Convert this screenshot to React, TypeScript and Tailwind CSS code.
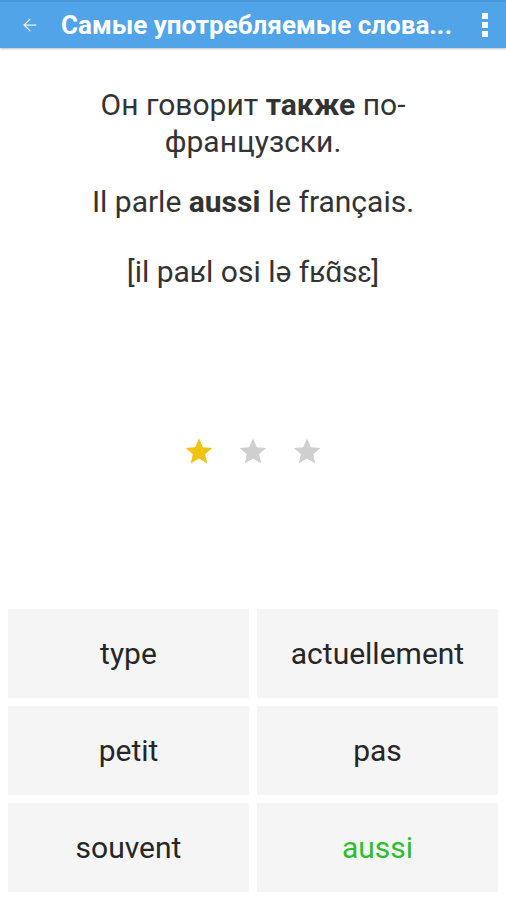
import { ArrowLeft } from 'lucide-react';

const words = [
  { text: 'type', correct: false },
  { text: 'actuellement', correct: false },
  { text: 'petit', correct: false },
  { text: 'pas', correct: false },
  { text: 'souvent', correct: false },
  { text: 'aussi', correct: true },
];

function Star({ filled }: { filled: boolean }) {
  return (
    <svg viewBox="0 0 24 24" className="w-[32px] h-[32px]">
      <path
        d="M12 2.5l2.9 6.6 7.1.6-5.4 4.7 1.6 7-6.2-3.7-6.2 3.7 1.6-7L2 9.7l7.1-.6z"
        fill={filled ? '#f2c315' : '#cfcfcf'}
      />
    </svg>
  );
}

export default function App() {
  return (
    <div className="w-[506px] h-[900px] bg-white flex flex-col font-['Roboto',sans-serif] text-[#333]">
      <div className="h-[48px] bg-[#51a4e8] border-t-2 border-[#4a97d8] shadow-[0_1px_2px_rgba(0,0,0,0.25)] flex items-center pl-[20px] pr-[18px] text-white">
        <ArrowLeft className="w-[20px] h-[20px] text-white/90 shrink-0" strokeWidth={1.5} />
        <h1 className="ml-[21px] flex-1 font-bold text-[26px] whitespace-nowrap leading-none">Самые употребляемые слова...</h1>
        <div className="flex flex-col gap-[3px] items-center shrink-0">
          <span className="w-[6px] h-[6px] bg-white" />
          <span className="w-[6px] h-[6px] bg-white" />
          <span className="w-[6px] h-[6px] bg-white" />
        </div>
      </div>

      <div className="flex-1 flex flex-col items-center px-[50px] pt-[38px] text-center">
        <p className="text-[30px] leading-[37px]">
          Он говорит <b className="font-bold">также</b> по-французски.
        </p>
        <p className="text-[30px] leading-[37px] mt-[23px]">
          Il parle <b className="font-bold">aussi</b> le français.
        </p>
        <p className="text-[30px] leading-[37px] mt-[33px]">[il paʁl osi lə fʁɑ̃sɛ]</p>

        <div className="flex gap-[22px] mt-[145px]">
          <Star filled />
          <Star filled={false} />
          <Star filled={false} />
        </div>
      </div>

      <div className="grid grid-cols-2 gap-2 px-2 pb-2">
        {words.map((w) => (
          <div
            key={w.text}
            className={`h-[89px] bg-[#f5f5f5] flex items-center justify-center text-[30px] ${w.correct ? 'text-[#2ebd2e]' : 'text-[#262626]'}`}
          >
            {w.text}
          </div>
        ))}
      </div>
    </div>
  );
}
